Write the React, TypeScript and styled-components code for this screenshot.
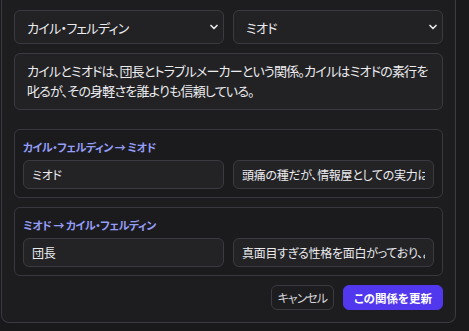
import React from 'react';
import styled, { createGlobalStyle } from 'styled-components';
import { ChevronDown } from 'lucide-react';

const GlobalStyle = createGlobalStyle`
    html, body {
        margin: 0;
        padding: 0;
        background: #19191c;
    }
    body {
        font-family: "Noto Sans CJK JP", "Noto Sans", sans-serif;
        color: #e4e4e7;
    }
    body, input, select, button {
        font-feature-settings: "palt";
    }
`

const Panel = styled.div`
    width: 455px;
    margin-left: 1px;
    box-sizing: border-box;
    background: #1d1d20;
    border: 1px solid #3a3a40;
    border-top: none;
    border-radius: 0 0 8px 8px;
    padding: 10px 12px 12px;
    display: flex;
    flex-direction: column;
    gap: 9px;
`

const Row = styled.div`
    display: grid;
    grid-template-columns: 1fr 1fr;
    gap: 9px;
`

const SelectWrap = styled.div`
    position: relative;
    display: flex;
`

const Select = styled.select`
    appearance: none;
    width: 100%;
    height: 34px;
    box-sizing: border-box;
    background: #222225;
    border: 1px solid #3a3a40;
    border-radius: 6px;
    color: #ececef;
    font-family: inherit;
    font-size: 13px;
    letter-spacing: -0.7px;
    padding: 0 28px 0 12px;
    outline: none;
`

const Chevron = styled(ChevronDown)`
    position: absolute;
    right: 4px;
    top: 11px;
    pointer-events: none;
    color: #e4e4e7;
`

const Description = styled.div`
    background: #222225;
    border: 1px solid #3a3a40;
    border-radius: 6px;
    padding: 7px 12px 8px;
    font-size: 13px;
    letter-spacing: -0.8px;
    line-height: 20px;
    color: #ececef;
`

const Card = styled.div<{ $first?: boolean }>`
    margin-top: ${p => p.$first ? '10px' : '0'};
    border: 1px solid #38383e;
    border-radius: 6px;
    background: #1b1b1e;
    padding: 9px 8px 8px;
    display: flex;
    flex-direction: column;
    gap: 5px;
`

const CardTitle = styled.div`
    font-size: 11px;
    font-weight: 700;
    letter-spacing: -0.5px;
    line-height: 16px;
    color: #959df7;
`

const Input = styled.input`
    height: 29px;
    box-sizing: border-box;
    width: 100%;
    min-width: 0;
    background: #232326;
    border: 1px solid #3a3a40;
    border-radius: 6px;
    color: #ececef;
    font-family: inherit;
    font-size: 12px;
    letter-spacing: -0.3px;
    padding: 0 8px;
    outline: none;
`

const Actions = styled.div`
    display: flex;
    justify-content: flex-end;
    gap: 9px;
`

const Button = styled.button<{ $primary?: boolean }>`
    height: 25px;
    padding: 0 ${p => p.$primary ? '10px' : '6px'};
    border-radius: 6px;
    font-family: inherit;
    font-size: ${p => p.$primary ? '11.5px' : '12px'};
    letter-spacing: ${p => p.$primary ? '0' : '-1px'};
    font-weight: ${p => p.$primary ? 700 : 400};
    color: ${p => p.$primary ? '#ffffff' : '#d4d4d8'};
    background: ${p => p.$primary ? '#5138ee' : 'transparent'};
    border: 1px solid ${p => p.$primary ? '#5138ee' : '#3a3a40'};
    cursor: pointer;
`

const relations = [
    { title: 'カイル・フェルディン → ミオド', label: 'ミオド', note: '頭痛の種だが、情報屋としての実力は認めている' },
    { title: 'ミオド → カイル・フェルディン', label: '団長', note: '真面目すぎる性格を面白がっており、よくからかっている' },
]

export default function App() {
    return (
        <>
            <GlobalStyle />
            <Panel>
                <Row>
                    <SelectWrap>
                        <Select defaultValue="kyle">
                            <option value="kyle">カイル・フェルディン</option>
                        </Select>
                        <Chevron size={12} strokeWidth={3.5} />
                    </SelectWrap>
                    <SelectWrap>
                        <Select defaultValue="miodo">
                            <option value="miodo">ミオド</option>
                        </Select>
                        <Chevron size={12} strokeWidth={3.5} />
                    </SelectWrap>
                </Row>

                <Description>
                    カイルとミオドは、団長とトラブルメーカーという関係。カイルはミオドの素行を叱るが、その身軽さを誰よりも信頼している。
                </Description>

                {relations.map((r, i) =>
                    <Card key={r.title} $first={i === 0}>
                        <CardTitle>{r.title}</CardTitle>
                        <Row>
                            <Input readOnly value={r.label} />
                            <Input readOnly value={r.note} />
                        </Row>
                    </Card>
                )}

                <Actions>
                    <Button>キャンセル</Button>
                    <Button $primary>この関係を更新</Button>
                </Actions>
            </Panel>
        </>
    )
}
